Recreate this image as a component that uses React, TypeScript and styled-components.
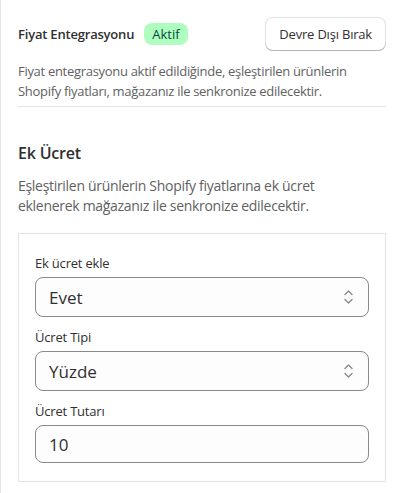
import styled, { createGlobalStyle } from 'styled-components'

const GlobalStyle = createGlobalStyle`
	html, body {
		margin: 0;
		background: #ffffff;
	}
	body {
		font-family: 'Open Sans', 'Noto Sans', sans-serif;
		color: #303030;
		-webkit-font-smoothing: antialiased;
	}
`

const Panel = styled.div`
	box-sizing: border-box;
	width: 402px;
	min-height: 493px;
	border-left: 1px solid #e3e3e3;
	padding: 17px 16px 0 17px;
`

const HeaderRow = styled.div`
	display: flex;
	align-items: center;
	justify-content: space-between;
	height: 34px;
`

const TitleGroup = styled.div`
	display: flex;
	align-items: center;
	gap: 10px;
`

const Title = styled.h2`
	margin: 0;
	font-size: 13px;
	font-weight: 600;
	line-height: 20px;
	letter-spacing: -0.2px;
	color: #303030;
`

const Badge = styled.span`
	display: inline-flex;
	align-items: center;
	height: 22px;
	padding: 0 8px;
	border-radius: 8px;
	background: #affebf;
	color: #014b40;
	font-size: 13px;
	line-height: 20px;
`

const Button = styled.button`
	box-sizing: border-box;
	height: 34px;
	padding: 0 14px;
	border: none;
	border-radius: 8px;
	background: #ffffff;
	font-family: inherit;
	font-size: 13px;
	font-weight: 500;
	letter-spacing: -0.2px;
	color: #303030;
	box-shadow: inset 0 -1px 0 0 #b5b5b5, inset 0 0 0 1px #e3e3e3;
	cursor: pointer;
`

const Text = styled.p<{ $size?: number }>`
	margin: 0;
	font-size: ${p => p.$size ?? 13}px;
	line-height: 20px;
	letter-spacing: -0.3px;
	color: #616161;
`

const Intro = styled(Text)`
	margin-top: 10px;
`

const Divider = styled.hr`
	margin: 5px 0 0;
	border: none;
	border-top: 1px solid #e3e3e3;
`

const SectionTitle = styled.h3`
	margin: 34px 0 0;
	font-size: 16px;
	font-weight: 600;
	line-height: 24px;
	letter-spacing: -0.2px;
	color: #303030;
`

const SectionText = styled(Text)`
	margin-top: 11px;
	max-width: 330px;
`

const FormBox = styled.div`
	box-sizing: border-box;
	margin-top: 17px;
	padding: 19px 16px 18px;
	border: 1px solid #e3e3e3;
	display: flex;
	flex-direction: column;
	gap: 10px;
`

const Field = styled.div`
	display: flex;
	flex-direction: column;
	gap: 4px;
`

const Label = styled.label`
	font-size: 13px;
	line-height: 20px;
	letter-spacing: -0.2px;
	color: #303030;
`

const Control = styled.div<{ $height?: number }>`
	box-sizing: border-box;
	display: flex;
	align-items: center;
	justify-content: space-between;
	height: ${p => p.$height ?? 40}px;
	padding: 0 14px 0 13px;
	border: 1px solid #8a8a8a;
	border-radius: 8px;
	background: #fdfdfd;
	font-size: 17px;
	color: #303030;
`

const Chevrons = () => (
	<svg width='11' height='16' viewBox='0 0 11 16' fill='none'>
		<path
			d='M2 5.5 5.5 2 9 5.5M2 10.5 5.5 14 9 10.5'
			stroke='#8a8a8a'
			strokeWidth='1.4'
			strokeLinecap='round'
			strokeLinejoin='round'
		/>
	</svg>
)

const App = () => {
	return (
		<>
			<GlobalStyle />
			<Panel>
				<HeaderRow>
					<TitleGroup>
						<Title>Fiyat Entegrasyonu</Title>
						<Badge>Aktif</Badge>
					</TitleGroup>
					<Button>Devre Dışı Bırak</Button>
				</HeaderRow>
				<Intro>
					Fiyat entegrasyonu aktif edildiğinde, eşleştirilen ürünlerin Shopify
					fiyatları, mağazanız ile senkronize edilecektir.
				</Intro>
				<Divider />
				<SectionTitle>Ek Ücret</SectionTitle>
				<SectionText $size={14}>
					Eşleştirilen ürünlerin Shopify fiyatlarına ek ücret eklenerek
					mağazanız ile senkronize edilecektir.
				</SectionText>
				<FormBox>
					<Field>
						<Label>Ek ücret ekle</Label>
						<Control>
							Evet
							<Chevrons />
						</Control>
					</Field>
					<Field>
						<Label>Ücret Tipi</Label>
						<Control>
							Yüzde
							<Chevrons />
						</Control>
					</Field>
					<Field>
						<Label>Ücret Tutarı</Label>
						<Control $height={38}>10</Control>
					</Field>
				</FormBox>
			</Panel>
		</>
	)
}

export default App
